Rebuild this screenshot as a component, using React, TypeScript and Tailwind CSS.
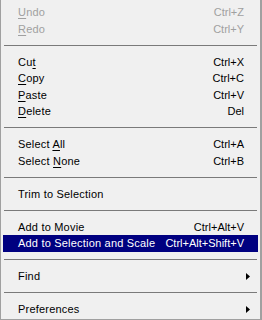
import React from "react";

type Item =
  | { type: "sep" }
  | {
      type: "item";
      label: React.ReactNode;
      shortcut?: string;
      disabled?: boolean;
      sub?: boolean;
      active?: boolean;
    };

const U = ({ c }: { c: string }) => <span className="underline underline-offset-2">{c}</span>;

const items: Item[] = [
  { type: "item", label: <><U c="U" />ndo</>, shortcut: "Ctrl+Z", disabled: true },
  { type: "item", label: <><U c="R" />edo</>, shortcut: "Ctrl+Y", disabled: true },
  { type: "sep" },
  { type: "item", label: <>Cu<U c="t" /></>, shortcut: "Ctrl+X" },
  { type: "item", label: <><U c="C" />opy</>, shortcut: "Ctrl+C" },
  { type: "item", label: <><U c="P" />aste</>, shortcut: "Ctrl+V" },
  { type: "item", label: <><U c="D" />elete</>, shortcut: "Del" },
  { type: "sep" },
  { type: "item", label: <>Select <U c="A" />ll</>, shortcut: "Ctrl+A" },
  { type: "item", label: <>Select <U c="N" />one</>, shortcut: "Ctrl+B" },
  { type: "sep" },
  { type: "item", label: "Trim to Selection" },
  { type: "sep" },
  { type: "item", label: "Add to Movie", shortcut: "Ctrl+Alt+V" },
  { type: "item", label: "Add to Selection and Scale", shortcut: "Ctrl+Alt+Shift+V", active: true },
  { type: "sep" },
  { type: "item", label: "Find", sub: true },
  { type: "sep" },
  { type: "item", label: "Preferences", sub: true },
];

function Arrow() {
  return (
    <svg width="4" height="7" viewBox="0 0 4 7" className="block">
      <path d="M0 0 L4 3.5 L0 7 Z" fill="#000" />
    </svg>
  );
}

export default function App() {
  return (
    <div
      className="w-[262px] h-[320px] bg-[#f0f0f0] border-l border-r-2 border-b border-[#a0a0a0] box-border pt-[4px] text-[11px] text-black overflow-hidden"
      style={{ fontFamily: '"Liberation Sans", Arial, sans-serif' }}
    >
      {items.map((it, i) =>
        it.type === "sep" ? (
          <div key={i} className="h-[16.5px] flex items-center px-[3px]">
            <div className="h-px w-full bg-[#7a7a7a]" />
          </div>
        ) : (
          <div
            key={i}
            className={`h-[16.5px] mx-[2px] flex items-center pl-[15px] pr-[14px] ${
              it.active ? "bg-[#000080] text-white" : it.disabled ? "text-[#a0a0a0]" : "text-black"
            }`}
          >
            <span className="flex-1 whitespace-nowrap tracking-[0.2px]">{it.label}</span>
            {it.shortcut && <span className="whitespace-nowrap">{it.shortcut}</span>}
            {it.sub && (
              <span className="mr-[-6px]">
                <Arrow />
              </span>
            )}
          </div>
        )
      )}
    </div>
  );
}
